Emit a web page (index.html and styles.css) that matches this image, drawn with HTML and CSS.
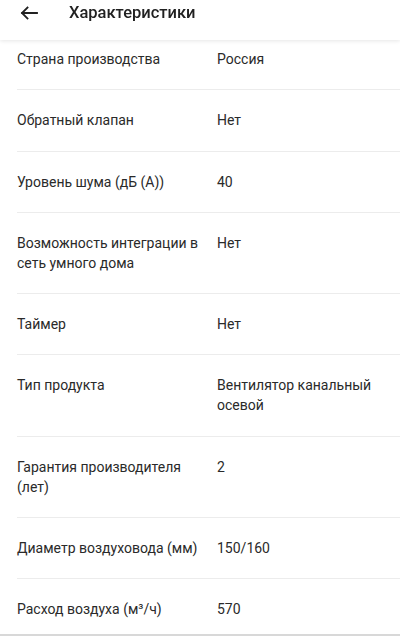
FILE: index.html
```html
<!DOCTYPE html>
<html lang="ru">
<head>
<meta charset="utf-8">
<link rel="stylesheet" href="styles.css">
</head>
<body>
<header class="topbar">
  <button class="back" aria-label="Назад">
    <svg width="18" height="14" viewBox="0 0 18 14"><path d="M17 7H2M7.5 1.5L2 7l5.5 5.5" fill="none" stroke="#212121" stroke-width="1.8" stroke-linecap="square"/></svg>
  </button>
  <h1 class="title">Характеристики</h1>
</header>
<main class="specs">
  <div class="row"><div class="label">Страна производства</div><div class="value">Россия</div></div>
  <div class="row"><div class="label">Обратный клапан</div><div class="value">Нет</div></div>
  <div class="row"><div class="label">Уровень шума (дБ (А))</div><div class="value">40</div></div>
  <div class="row"><div class="label">Возможность интеграции в сеть умного дома</div><div class="value">Нет</div></div>
  <div class="row"><div class="label">Таймер</div><div class="value">Нет</div></div>
  <div class="row"><div class="label">Тип продукта</div><div class="value">Вентилятор канальный осевой</div></div>
  <div class="row"><div class="label">Гарантия производителя (лет)</div><div class="value">2</div></div>
  <div class="row"><div class="label">Диаметр воздуховода (мм)</div><div class="value">150/160</div></div>
  <div class="row"><div class="label">Расход воздуха (м³/ч)</div><div class="value">570</div></div>
</main>
</body>
</html>
```
FILE: styles.css
```css
* { box-sizing: border-box; }
html, body { margin: 0; padding: 0; background: #fff; }
body {
  font-family: Roboto, "Noto Sans", "Liberation Sans", sans-serif;
  color: #212121;
  width: 400px;
  height: 636px;
  overflow: hidden;
  position: relative;
}
.topbar {
  position: sticky;
  top: 0;
  z-index: 2;
  height: 40px;
  background: #fff;
  display: flex;
  align-items: flex-start;
  padding-top: 3px;
  box-shadow: 0 1px 4px rgba(0,0,0,0.10);
}
.back {
  border: 0;
  background: none;
  padding: 0;
  margin: 3px 0 0 20px;
  width: 18px;
  height: 14px;
  display: flex;
}
.title {
  margin: 0 0 0 31px;
  font-size: 16.5px;
  font-weight: 500;
  line-height: 20px;
  color: #212121;
}
.specs {
  margin-top: -11px;
  padding-left: 17px;
}
.row {
  display: grid;
  grid-template-columns: 184px 1fr;
  column-gap: 16px;
  padding: 20px 0 20.25px;
  border-bottom: 1px solid #ececec;
  font-size: 14px;
  line-height: 20px;
  color: #2a2a2a;
}
.value { padding-right: 8px; }
body::after {
  content: "";
  position: absolute;
  left: 0; right: 0; bottom: 0;
  height: 2px;
  background: #d8d8d8;
}
```
